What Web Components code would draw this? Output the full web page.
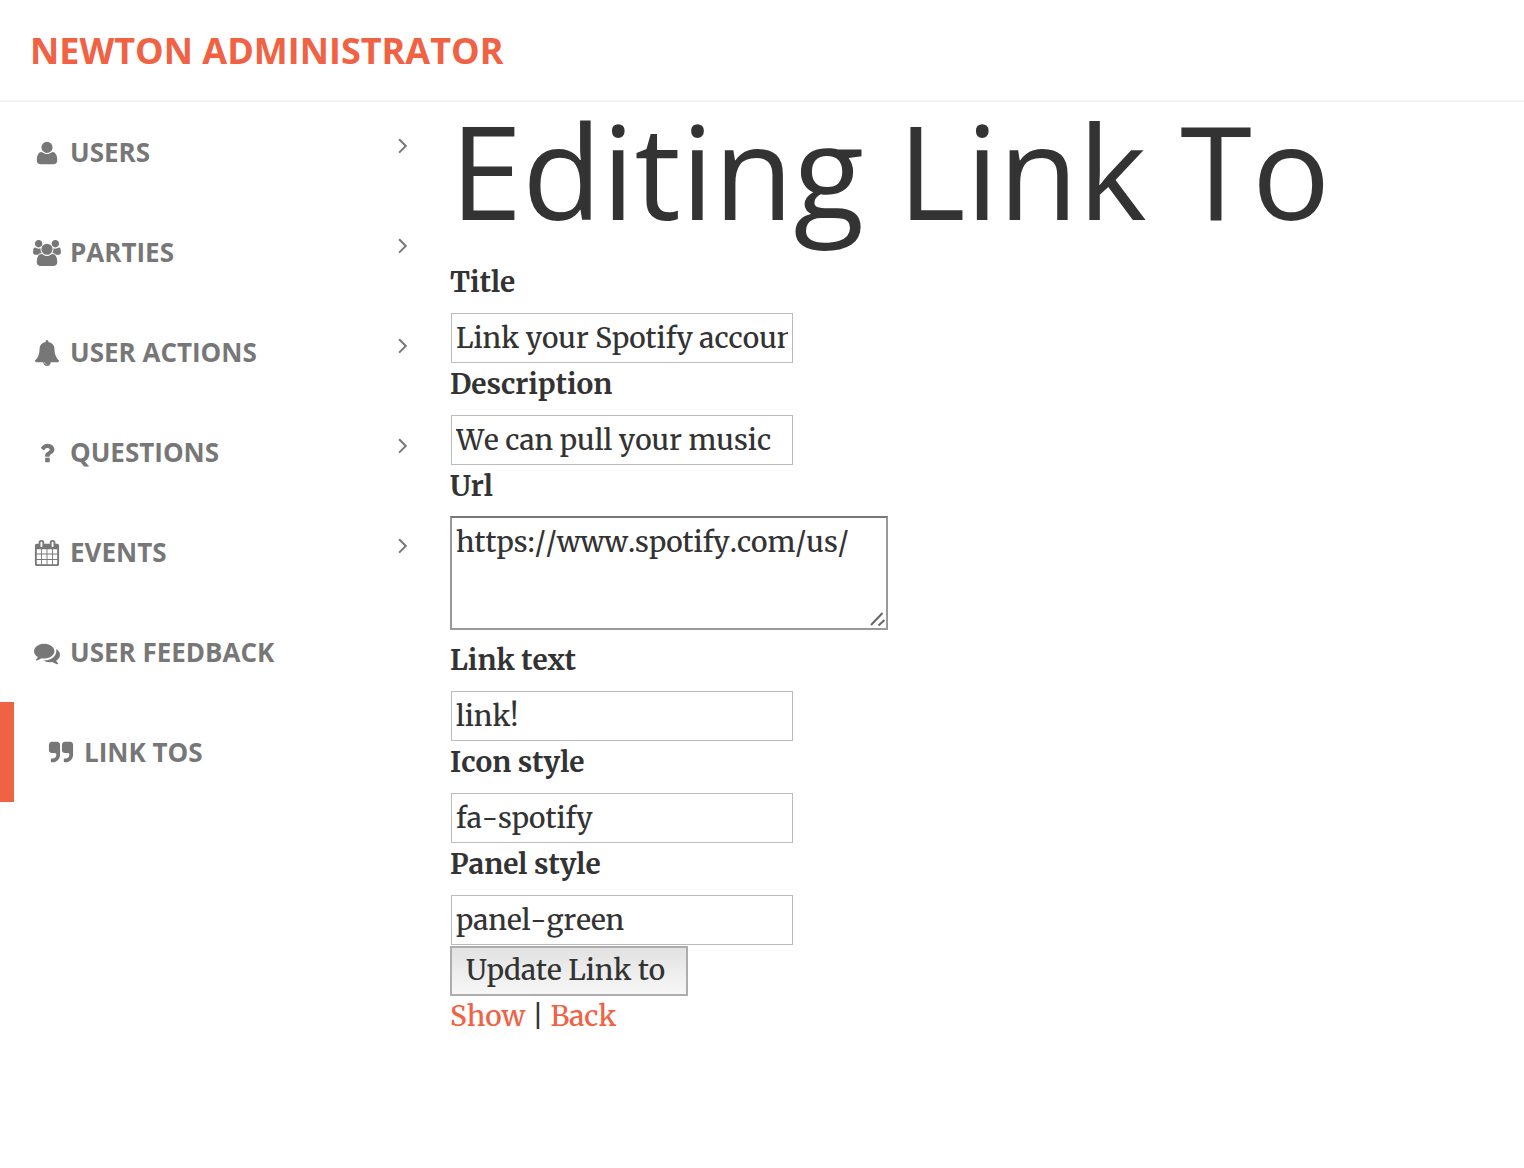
<!DOCTYPE html>
<html lang="en">
<head>
<meta charset="utf-8">
<meta name="viewport" content="width=device-width, initial-scale=1">
<title>Newton Administrator</title>
<style>
  body {
    margin: 0;
    background: #fff;
    color: #333;
    --accent: #f16143;
    --muted: #777;
    --sans: "Open Sans", "Noto Sans", sans-serif;
    --serif: Merriweather, "DejaVu Serif Condensed", "DejaVu Serif", serif;
    font: 500 28px/40px var(--serif);
  }
  edit-form, page-links { font-kerning: none; }
</style>
</head>
<body>
<admin-shell>
  <admin-header slot="header">Newton Administrator</admin-header>
  <side-nav slot="nav">
    <nav-item icon="user" expandable>Users</nav-item>
    <nav-item icon="users" expandable>Parties</nav-item>
    <nav-item icon="bell" expandable>User Actions</nav-item>
    <nav-item icon="question" expandable>Questions</nav-item>
    <nav-item icon="calendar" expandable>Events</nav-item>
    <nav-item icon="comments">User Feedback</nav-item>
    <nav-item icon="quote" active>Link Tos</nav-item>
  </side-nav>
  <page-title>Editing Link To</page-title>
  <edit-form>
    <form-field label="Title" value="Link your Spotify account"></form-field>
    <form-field label="Description" value="We can pull your music"></form-field>
    <form-field label="Url" value="https://www.spotify.com/us/" multiline></form-field>
    <form-field label="Link text" value="link!"></form-field>
    <form-field label="Icon style" value="fa-spotify"></form-field>
    <form-field label="Panel style" value="panel-green"></form-field>
    <submit-button>Update Link to</submit-button>
  </edit-form>
  <page-links></page-links>
</admin-shell>

<script>
const define = (name, html, setup) => {
  const template = document.createElement('template');
  template.innerHTML = html;
  customElements.define(name, class extends HTMLElement {
    constructor() {
      super();
      this.attachShadow({ mode: 'open' }).append(template.content.cloneNode(true));
    }
    connectedCallback() { if (setup) setup(this, this.shadowRoot); }
  });
};

const person = 'M1600 1533q0 120-73 189.5t-194 69.5h-874q-121 0-194-69.5t-73-189.5q0-53 3.5-103.5t14-109 26.5-108.5 43-97.5 62-81 85.5-53.5 111.5-20q10 0 43 21.5t73 48 107 48 135 21.5 135-21.5 107-48 73-48 43-21.5q61 0 111.5 20t85.5 53.5 62 81 43 97.5 26.5 108.5 14 109 3.5 103.5zM1280 640q0 159-112.5 271.5t-271.5 112.5-271.5-112.5-112.5-271.5 112.5-271.5 271.5-112.5 271.5 112.5 112.5 271.5z';
const quoteMark = 'v704q0 104-40.5 198.5t-109.5 163.5-163.5 109.5-198.5 40.5h-64q-26 0-45-19t-19-45v-128q0-26 19-45t45-19h64q106 0 181-75t75-181v-32q0-40-28-68t-68-28h-224q-80 0-136-56t-56-136v-384q0-80 56-136t136-56h384q80 0 136 56t56 136z';

// Each icon: vertical origin of its view box, then its path.
const icons = {
  user: [128, person],
  users: [0, person + 'M529 896q-162 5-265 128h-134q-82 0-138-40.5t-56-118.5q0-353 124-353 6 0 43.5 21t97.5 42.5 119 21.5q67 0 133-23-5 37-5 66 0 139 81 256zM576 256q0 106-75 181t-181 75-181-75-75-181 75-181 181-75 181 75 75 181zM1856 865q0 78-56 118.5t-138 40.5h-134q-103-123-265-128 81-117 81-256 0-29-5-66 66 23 133 23 59 0 119-21.5t97.5-42.5 43.5-21q124 0 124 353zm-128-609q0 106-75 181t-181 75-181-75-75-181 75-181 181-75 181 75 75 181z'],
  bell: [0, 'M912 1696q0-16-16-16-59 0-101.5-42.5t-42.5-101.5q0-16-16-16t-16 16q0 73 51.5 124.5t124.5 51.5q16 0 16-16zm816-288q0 52-38 90t-90 38h-448q0 106-75 181t-181 75-181-75-75-181h-448q-52 0-90-38t-38-90q50-42 91-88t85-119.5 74.5-158.5 50-206 19.5-260q0-152 117-282.5t307-158.5q-8-19-8-39 0-40 28-68t68-28 68 28 28 68q0 20-8 39 190 28 307 158.5t117 282.5q0 139 19.5 260t50 206 74.5 158.5 85 119.5 91 88z'],
  question: [0, 'M1088 1256v240q0 16-12 28t-28 12h-240q-16 0-28-12t-12-28v-240q0-16 12-28t28-12h240q16 0 28 12t12 28zm316-600q0 54-15.5 101t-35 76.5-55 59.5-57.5 43.5-61 35.5q-41 23-68.5 65t-27.5 67q0 17-12 32.5t-28 15.5h-240q-15 0-25.5-18.5t-10.5-37.5v-45q0-83 65-156.5t143-108.5q59-27 84-56t25-76q0-42-46.5-74t-107.5-32q-65 0-108 29-35 25-107 115-13 16-31 16-12 0-25-8l-164-125q-13-10-15.5-25t5.5-28q160-266 464-266 80 0 161 31t146 83 106 127.5 41 158.5z'],
  calendar: [0, 'M192 1664h288v-288h-288v288zm352 0h320v-288h-320v288zm-352-352h288v-320h-288v320zm352 0h320v-320h-320v320zm-352-384h288v-288h-288v288zm736 736h320v-288h-320v288zm-384-736h320v-288h-320v288zm768 736h288v-288h-288v288zm-384-352h320v-320h-320v320zm-352-864v-288q0-13-9.5-22.5t-22.5-9.5h-64q-13 0-22.5 9.5t-9.5 22.5v288q0 13 9.5 22.5t22.5 9.5h64q13 0 22.5-9.5t9.5-22.5zm736 864h288v-320h-288v320zm-384-384h320v-288h-320v288zm384 0h288v-288h-288v288zm32-480v-288q0-13-9.5-22.5t-22.5-9.5h-64q-13 0-22.5 9.5t-9.5 22.5v288q0 13 9.5 22.5t22.5 9.5h64q13 0 22.5-9.5t9.5-22.5zm384-64v1280q0 52-38 90t-90 38h-1408q-52 0-90-38t-38-90v-1280q0-52 38-90t90-38h128v-96q0-66 47-113t113-47h64q66 0 113 47t47 113v96h384v-96q0-66 47-113t113-47h64q66 0 113 47t47 113v96h128q52 0 90 38t38 90z'],
  comments: [0, 'M1408 768q0 139-94 257t-256.5 186.5-353.5 68.5q-86 0-176-16-124 88-278 128-36 9-86 16h-3q-11 0-20.5-8t-11.5-21q-1-3-1-6.5t.5-6.5 2-6l2.5-5 3.5-5.5 4-5 4.5-5 4-4.5q5-6 23-25t26-29.5 22.5-29 25-38.5 20.5-44q-124-72-195-177t-71-224q0-139 94-257t256.5-186.5 353.5-68.5 353.5 68.5 256.5 186.5 94 257zm384 256q0 120-71 224.5t-195 176.5q10 24 20.5 44t25 38.5 22.5 29 26 29.5 23 25q1 1 4 4.5t4.5 5 4 5 3.5 5.5l2.5 5 2 6 .5 6.5-1 6.5q-3 14-13 22t-22 7q-50-7-86-16-154-40-278-128-90 16-176 16-271 0-472-132 58 4 88 4 161 0 309-45t264-129q125-92 192-212t67-254q0-77-23-152 129 71 204 178t75 230z'],
  quote: [0, 'M832 320' + quoteMark + 'M1728 320' + quoteMark],
  angle: [0, 'M1171 960q0 13-10 23l-466 466q-10 10-23 10t-23-10l-50-50q-10-10-10-23t10-23l393-393-393-393q-10-10-10-23t10-23l50-50q10-10 23-10t23 10l466 466q10 10 10 23z']
};

define('fa-icon', `
  <style>
    :host { display: block; flex: none; width: 34px; height: 26px; }
    svg { display: block; width: 100%; height: 100%; overflow: visible; fill: currentColor; }
  </style>
  <svg aria-hidden="true"><path/></svg>`, (host, root) => {
  const [top, d] = icons[host.getAttribute('name')];
  root.querySelector('svg').setAttribute('viewBox', `0 ${top} 1792 1792`);
  root.querySelector('path').setAttribute('d', d);
});

define('admin-shell', `
  <style>
    :host { display: block; }
    .body { display: flex; align-items: flex-start; gap: 30px; }
    main { flex: 1; min-width: 0; }
  </style>
  <slot name="header"></slot>
  <div class="body"><slot name="nav"></slot><main><slot></slot></main></div>`);

define('admin-header', `
  <style>
    :host { display: block; border-bottom: 2px solid #f3f3f3; }
    header { padding: 2px 30px 0; }
    a {
      display: block; color: var(--accent); font: 700 36px/98px var(--sans);
      text-decoration: none; text-transform: uppercase;
    }
  </style>
  <header><a href="#"><slot></slot></a></header>`);

define('side-nav', `
  <style>
    :host { display: block; flex: none; width: 420px; }
    nav { display: flex; flex-direction: column; }
  </style>
  <nav><slot></slot></nav>`);

define('nav-item', `
  <style>
    :host { display: block; }
    :host([active]) { border-left: 14px solid var(--accent); }
    a {
      display: flex; align-items: center; gap: 6px; height: 100px; box-sizing: border-box;
      padding: 2px 0 0 30px; color: var(--muted); text-decoration: none;
      font: 700 26px/40px var(--sans); text-transform: uppercase;
    }
    .text { flex: 1; padding-bottom: 2px; }
    .angle { align-self: flex-start; margin-top: 28px; }
  </style>
  <a href="#"><span class="text"><slot></slot></span></a>`,
(host, root) => {
  const makeIcon = (name, className) => {
    const icon = document.createElement('fa-icon');
    icon.setAttribute('name', name);
    icon.className = className;
    return icon;
  };
  const link = root.querySelector('a');
  link.prepend(makeIcon(host.getAttribute('icon'), 'lead'));
  if (host.hasAttribute('expandable')) link.append(makeIcon('angle', 'angle'));
});

define('page-title', `
  <style>
    :host { display: block; }
    h1 { margin: 0 0 24px; font: 400 130px/136px var(--sans); }
  </style>
  <h1><slot></slot></h1>`);

define('edit-form', `
  <style>
    :host { display: block; }
    form { display: flex; flex-direction: column; align-items: flex-start; }
  </style>
  <form><slot></slot></form>`);

define('form-field', `
  <style>
    :host { display: flex; flex-direction: column; align-items: flex-start; gap: 10px; max-width: 100%; }
    label { font-weight: 700; }
    .box { position: relative; max-width: 100%; }
    input, textarea {
      display: block; box-sizing: border-box; max-width: 100%; font: inherit; color: inherit;
      font-kerning: inherit; background: #fff; border-radius: 0; outline: none;
    }
    input { width: 342px; height: 50px; margin: 1px; padding: 0 4px; border: 1px solid #bbb; }
    textarea {
      width: 438px; height: 114px; padding: 4px; overflow: hidden;
      border: 2px solid #999; border-top-color: #777; resize: both;
    }
    textarea::-webkit-resizer { display: none; }
    :host([multiline]) { margin-bottom: 10px; }
    .grip {
      display: none; position: absolute; right: 2px; bottom: 2px; width: 16px; height: 16px;
      stroke: #666; stroke-width: 2; pointer-events: none;
    }
    :host([multiline]) .grip { display: block; }
  </style>
  <label for="control"></label>
  <div class="box"><svg class="grip" viewBox="0 0 16 16" aria-hidden="true"><path d="M1 13L12.5 1M8.5 13.5L14.5 8"/></svg></div>`,
(host, root) => {
  root.querySelector('label').textContent = host.getAttribute('label');
  const control = document.createElement(host.hasAttribute('multiline') ? 'textarea' : 'input');
  control.id = 'control';
  control.spellcheck = false;
  control.value = host.getAttribute('value');
  root.querySelector('.box').prepend(control);
});

define('submit-button', `
  <style>
    :host { display: block; }
    button {
      display: block; min-width: 238px; height: 50px; padding: 0 14px 2px; text-align: left;
      font: inherit; color: inherit; font-kerning: inherit;
      border: 2px solid #adadad; border-radius: 0; background: linear-gradient(#e2e2e2, #f7f7f7);
    }
  </style>
  <button type="button"><slot></slot></button>`);

define('page-links', `
  <style>
    :host { display: block; }
    a { color: var(--accent); text-decoration: none; }
  </style>
  <a href="#">Show</a> | <a href="#">Back</a>`);
</script>
</body>
</html>
